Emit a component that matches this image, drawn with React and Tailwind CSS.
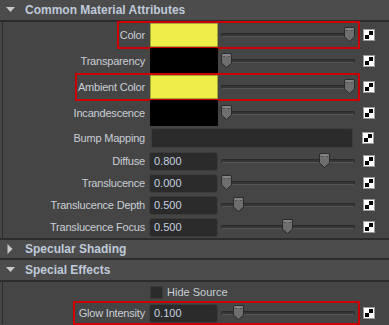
import React from "react";

const font = { fontFamily: '"Liberation Sans", Arial, sans-serif' };

const Triangle = ({ open }) =>
  open ? (
    <svg width="10" height="6" className="ml-[6px]">
      <path d="M0 0 H9 L4.5 5 Z" fill="#c9c9c9" />
    </svg>
  ) : (
    <svg width="10" height="10" className="ml-[7px]">
      <path d="M0.5 0 L5.5 5 L0.5 10 Z" fill="#c9c9c9" />
    </svg>
  );

const Header = ({ title, open, top }) => (
  <div
    className={`h-[22px] bg-[#4c4c4c] flex items-center border-b-2 border-[#2c2c2c] ${
      top ? "" : "border-t-2"
    }`}
  >
    <div className="w-[24px] flex items-center">
      <Triangle open={open} />
    </div>
    <span className="ml-[1px] text-[12px] font-bold text-[#bfcadb]">{title}</span>
  </div>
);

const Checker = () => (
  <div className="w-[12px] h-[12px] border border-[#9a9a9a] bg-white grid grid-cols-2 grid-rows-2 p-px">
    <div className="bg-white" />
    <div className="bg-black" />
    <div className="bg-black" />
    <div className="bg-white" />
  </div>
);

const Thumb = () => (
  <svg width="11" height="15" viewBox="0 0 11 15">
    <path
      d="M0.5 2 Q0.5 0.5 2 0.5 H9 Q10.5 0.5 10.5 2 V10 L5.5 14.5 L0.5 10 Z"
      fill="#6e6e6e"
      stroke="#2a2a2a"
    />
    <path d="M1.5 2 H9.5" stroke="#9a9a9a" />
    <path d="M3 3 V4 M8 3 V4" stroke="#333" />
  </svg>
);

const Slider = ({ pos }) => (
  <div className="relative w-[140px] h-[20px] flex items-center">
    <div className="absolute left-[3px] right-[3px] top-[8px] h-[4px] rounded-[2px] bg-[#353535] border border-[#2a2a2a] border-b-[#555]" />
    <div className="absolute top-[2px]" style={{ left: pos - 218 - 5 }}>
      <Thumb />
    </div>
  </div>
);

const Label = ({ children }) => (
  <div className="w-[143px] text-right text-[11px] text-[#c9ced6] tracking-[-0.2px] pr-px">
    {children}
  </div>
);

const Highlight = ({ left }) => (
  <div
    className="absolute -top-px -bottom-px right-[29px] border-2 border-[#cc0000] pointer-events-none"
    style={{ left: left - 3 }}
  />
);

const SwatchRow = ({ label, color, pos, hl }) => (
  <div className="relative h-[26px] flex items-center">
    <Label>{label}</Label>
    <div className="ml-[4px] w-[68px] h-[26px] flex items-center">
      {color === "yellow" ? (
        <div className="w-[68px] h-[24px] bg-[#eeee48] border border-[#a8a838] rounded-[1px]" />
      ) : (
        <div className="w-[68px] h-[26px] bg-black" />
      )}
    </div>
    <Slider pos={pos} />
    <div className="ml-[5px]">
      <Checker />
    </div>
    {hl && <Highlight left={hl} />}
  </div>
);

const NumRow = ({ label, value, pos, hl, h = "h-[22px]" }) => (
  <div className={`relative ${h} flex items-center`}>
    <Label>{label}</Label>
    <div className="ml-[3px] w-[69px] h-[19px] bg-[#2b2b2b] border border-[#3c3c3c] rounded-[3px] flex items-center pl-[4px] text-[11px] text-[#c5d2e0]">
      {value}
    </div>
    <Slider pos={pos} />
    <div className="ml-[5px]">
      <Checker />
    </div>
    {hl && <Highlight left={hl} />}
  </div>
);

export default function App() {
  return (
    <div className="w-[389px] h-[325px] bg-[#454545] overflow-hidden" style={font}>
      <Header title="Common Material Attributes" open top />
      <div className="ml-[2px] border-l border-[#2c2c2c]">
        <SwatchRow label="Color" color="yellow" pos={349} hl={117} />
        <SwatchRow label="Transparency" color="black" pos={226} />
        <SwatchRow label="Ambient Color" color="yellow" pos={349} hl={75} />
        <SwatchRow label="Incandescence" color="black" pos={226} />
        <div className="h-[24px] flex items-center">
          <Label>Bump Mapping</Label>
          <div className="ml-[5px] w-[202px] h-[20px] bg-[#2b2b2b] border border-[#3c3c3c] rounded-[3px]" />
          <div className="ml-[9px]">
            <Checker />
          </div>
        </div>
        <NumRow label="Diffuse" value="0.800" pos={324} />
        <NumRow label="Translucence" value="0.000" pos={226} />
        <NumRow label="Translucence Depth" value="0.500" pos={238} />
        <NumRow label="Translucence Focus" value="0.500" pos={287} />
      </div>
      <Header title="Specular Shading" />
      <Header title="Special Effects" open top />
      <div className="ml-[2px] border-l border-[#2c2c2c]">
        <div className="h-[20px] flex items-center">
          <div className="w-[147px]" />
          <div className="w-[13px] h-[13px] bg-[#2b2b2b] border border-[#3a3a3a]" />
          <span className="ml-[4px] text-[11px] text-[#c9ced6]">Hide Source</span>
        </div>
        <NumRow label="Glow Intensity" value="0.100" pos={238} hl={73} />
      </div>
    </div>
  );
}
